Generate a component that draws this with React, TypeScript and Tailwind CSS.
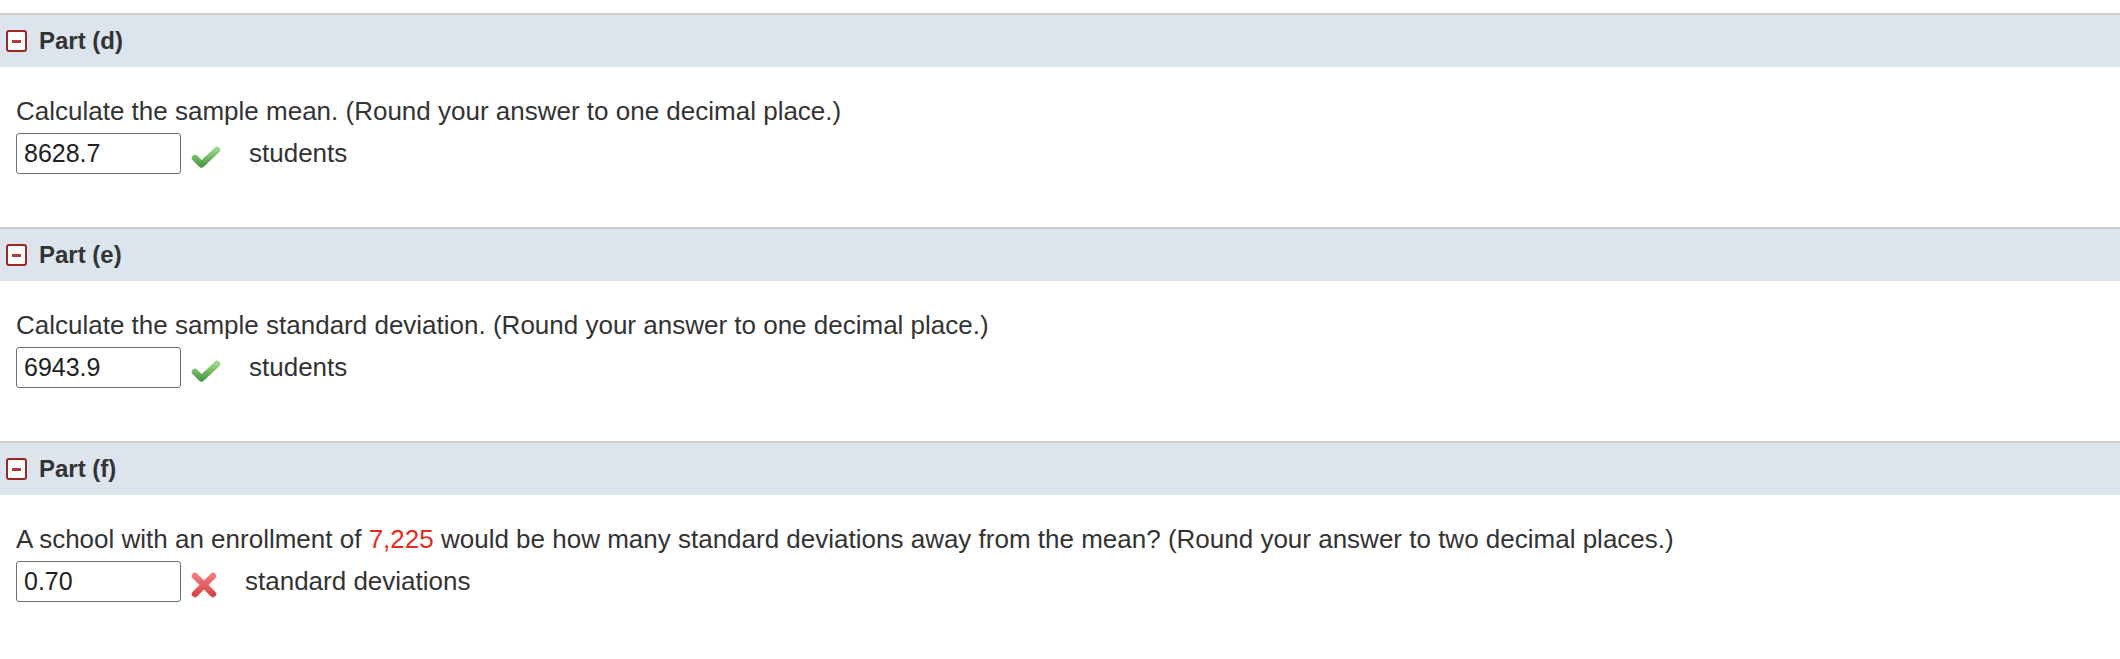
import type { ReactNode } from 'react';

const CollapseIcon = () => (
  <span className="flex items-center justify-center w-[21px] h-[22px] rounded-[3px] border-2 border-[#9b2626] bg-white shrink-0">
    <span className="block w-[9px] h-[3px] bg-[#b23a3a]" />
  </span>
);

const CheckIcon = () => (
  <svg width="32" height="26" viewBox="0 0 32 26" className="shrink-0">
    <defs>
      <linearGradient id="chk" x1="0" y1="0" x2="0" y2="1">
        <stop offset="0" stopColor="#9ad58a" />
        <stop offset="1" stopColor="#4f9f45" />
      </linearGradient>
    </defs>
    <path d="M5 14 L11.5 20.5 L27 6" fill="none" stroke="url(#chk)" strokeWidth={6.5} strokeLinecap="round" strokeLinejoin="round" />
  </svg>
);

const CrossIcon = () => (
  <svg width="32" height="28" viewBox="0 0 32 28" className="shrink-0">
    <defs>
      <linearGradient id="crs" x1="0" y1="0" x2="0" y2="1">
        <stop offset="0" stopColor="#ef7a7a" />
        <stop offset="1" stopColor="#d94848" />
      </linearGradient>
    </defs>
    <path d="M5 5 L23 23 M23 5 L5 23" fill="none" stroke="url(#crs)" strokeWidth={6.5} strokeLinecap="round" />
  </svg>
);

interface PartProps {
  label: string;
  question: ReactNode;
  value: string;
  correct: boolean;
  unit: string;
}

const Part = ({ label, question, value, correct, unit }: PartProps) => (
  <section>
    {/* Header bar */}
    <div className="border-t-2 border-[#cdcdcd] bg-[#dce5ee] h-[54px] flex items-center pl-[6px] gap-3">
      <CollapseIcon />
      <span className="text-[24px] font-bold text-[#333333]">{label}</span>
    </div>

    {/* Body */}
    <div className="pl-4 pt-[29px] pb-[53px]">
      <p className="text-[26px] leading-[30px] text-[#333333]">{question}</p>
      <div className="flex items-center mt-[7px]">
        <div className="w-[165px] h-[41px] border-[1.5px] border-[#6f6f6f] rounded-[3px] flex items-center pl-[7px] text-[25px] text-[#222222]">
          {value}
        </div>
        <div className="ml-[9px] mt-[6px] w-[32px] flex justify-center">
          {correct ? <CheckIcon /> : <CrossIcon />}
        </div>
        <span className={`${correct ? 'ml-[27px]' : 'ml-[23px]'} text-[26px] text-[#333333]`}>{unit}</span>
      </div>
    </div>
  </section>
);

export default function App() {
  return (
    <div
      className="w-full min-h-screen bg-white pt-[13px]"
      style={{ fontFamily: '"Liberation Sans", Arial, sans-serif' }}
    >
      <Part
        label="Part (d)"
        question="Calculate the sample mean. (Round your answer to one decimal place.)"
        value="8628.7"
        correct
        unit="students"
      />
      <Part
        label="Part (e)"
        question="Calculate the sample standard deviation. (Round your answer to one decimal place.)"
        value="6943.9"
        correct
        unit="students"
      />
      <Part
        label="Part (f)"
        question={
          <>
            A school with an enrollment of <span className="text-[#e8291c]">7,225</span> would be how many standard
            deviations away from the mean? (Round your answer to two decimal places.)
          </>
        }
        value="0.70"
        correct={false}
        unit="standard deviations"
      />
    </div>
  );
}
